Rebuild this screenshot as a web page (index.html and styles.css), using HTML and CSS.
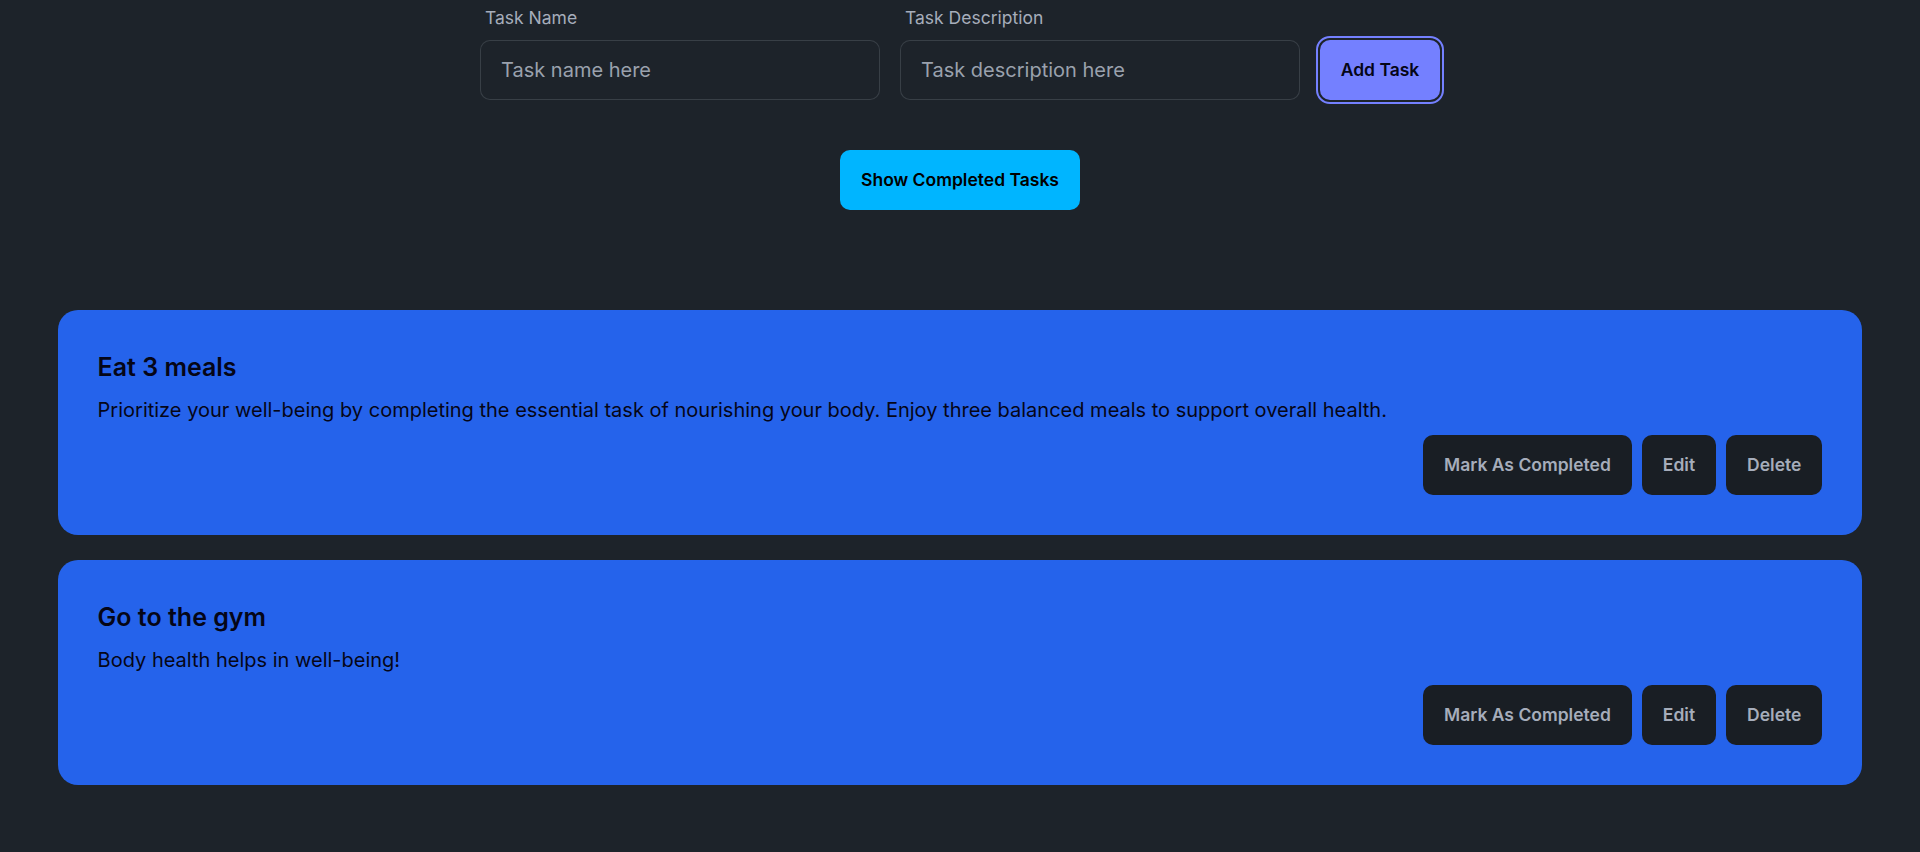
FILE: index.html
```html
<!DOCTYPE html>
<html lang="en">
<head>
<meta charset="utf-8">
<title>Tasks</title>
<link rel="stylesheet" href="styles.css">
</head>
<body>
<main class="page">
  <form class="task-form">
    <div class="field">
      <label class="field-label" for="name">Task Name</label>
      <input class="field-input" id="name" type="text" placeholder="Task name here">
    </div>
    <div class="field">
      <label class="field-label" for="desc">Task Description</label>
      <input class="field-input" id="desc" type="text" placeholder="Task description here">
    </div>
    <button type="button" class="btn btn-primary btn-focused">Add Task</button>
  </form>

  <div class="toggle-row">
    <button type="button" class="btn btn-info">Show Completed Tasks</button>
  </div>

  <section class="task-list">
    <article class="task-card">
      <h2 class="task-title">Eat 3 meals</h2>
      <p class="task-desc">Prioritize your well-being by completing the essential task of nourishing your body. Enjoy three balanced meals to support overall health.</p>
      <div class="task-actions">
        <button type="button" class="btn btn-dark">Mark As Completed</button>
        <button type="button" class="btn btn-dark">Edit</button>
        <button type="button" class="btn btn-dark">Delete</button>
      </div>
    </article>
    <article class="task-card">
      <h2 class="task-title">Go to the gym</h2>
      <p class="task-desc">Body health helps in well-being!</p>
      <div class="task-actions">
        <button type="button" class="btn btn-dark">Mark As Completed</button>
        <button type="button" class="btn btn-dark">Edit</button>
        <button type="button" class="btn btn-dark">Delete</button>
      </div>
    </article>
  </section>
</main>
</body>
</html>
```

FILE: styles.css
```css
* { box-sizing: border-box; }

html, body {
  margin: 0;
  padding: 0;
  background: #1d232a;
  font-family: Inter, "Noto Sans", sans-serif;
  color: #a6adbb;
}

.page {
  display: flex;
  flex-direction: column;
  align-items: center;
}

.task-form {
  display: flex;
  align-items: flex-end;
  gap: 20px;
  margin: 0;
}

.field {
  display: flex;
  flex-direction: column;
  width: 400px;
}

.field-label {
  padding: 5px 5px 10px;
  font-size: 17.5px;
  line-height: 25px;
  color: #a6adbb;
}

.field-input {
  height: 60px;
  width: 100%;
  padding: 0 20px;
  font-family: inherit;
  font-size: 20px;
  color: #a6adbb;
  background: #1d232a;
  border: 1px solid rgba(166, 173, 187, 0.2);
  border-radius: 10px;
  outline: none;
}

.field-input::placeholder {
  color: #9aa1ad;
}

.btn {
  height: 60px;
  padding: 0 20px;
  border: 1px solid transparent;
  border-radius: 10px;
  font-family: inherit;
  font-size: 17.5px;
  font-weight: 600;
  line-height: 1;
  cursor: pointer;
  white-space: nowrap;
}

.btn-primary {
  background: #7480ff;
  color: #050617;
  width: 120px;
  padding: 0;
}

.btn-focused {
  outline: 2px solid #7480ff;
  outline-offset: 2px;
}

.toggle-row {
  margin-top: 50px;
  display: flex;
  justify-content: center;
}

.btn-info {
  background: #00b5ff;
  color: #000;
  width: 240px;
  padding: 0;
}

.task-list {
  width: 94%;
  margin-top: 100px;
  display: flex;
  flex-direction: column;
  gap: 25px;
}

.task-card {
  background: #2563eb;
  border-radius: 20px;
  padding: 40px;
  display: flex;
  flex-direction: column;
  gap: 10px;
  color: #050617;
}

.task-title {
  margin: 0;
  font-size: 25px;
  line-height: 35px;
  font-weight: 600;
}

.task-desc {
  margin: 0;
  font-size: 20px;
  line-height: 30px;
}

.task-actions {
  display: flex;
  justify-content: flex-end;
  gap: 10px;
}

.btn-dark {
  background: #191e24;
  color: #a6adbb;
}
```
